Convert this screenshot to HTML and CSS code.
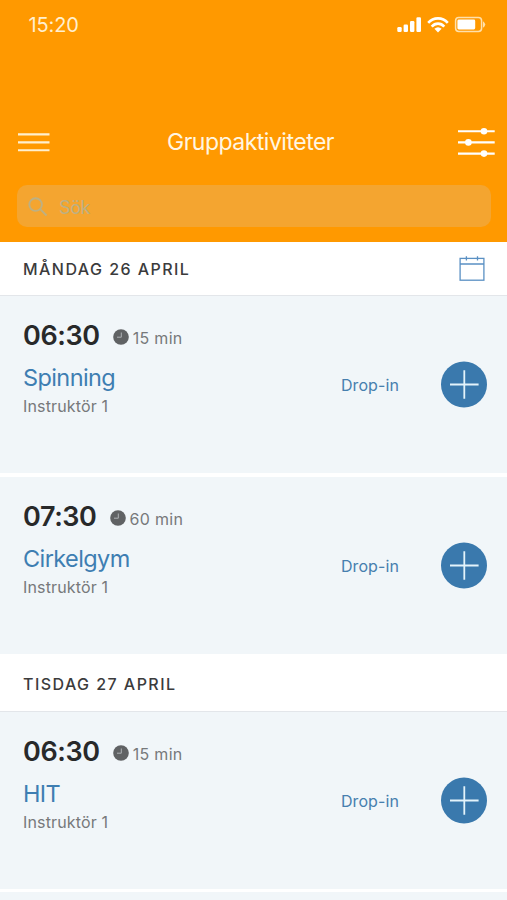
FILE: index.html
```html
<!DOCTYPE html>
<html lang="sv">
<head>
<meta charset="utf-8">
<title>Gruppaktiviteter</title>
<link rel="stylesheet" href="styles.css">
</head>
<body>
<svg class="defs" width="0" height="0">
  <symbol id="clock" viewBox="0 0 16 16"><circle cx="8" cy="8" r="7.8" fill="#606264"/><path d="M8.3 3.5V8.2H4" fill="none" stroke="#aeb2b4" stroke-width="1"/></symbol>
  <symbol id="plus" viewBox="0 0 46 47"><circle cx="23" cy="23.4" r="23" fill="#3a79ad"/><path d="M23.3 9.2V37.8M9 23.5H37.6" stroke="#e3f3fb" stroke-width="1.8"/></symbol>
</svg>
<header class="header">
  <div class="status">
    <span class="clock">15:20</span>
    <svg width="90" height="18" viewBox="0 0 90 18" fill="#fff">
      <rect x="0.3" y="11" width="4.4" height="5" rx="1.2"/><rect x="6.6" y="8.6" width="4.4" height="7.4" rx="1.2"/><rect x="13" y="5" width="4.4" height="11" rx="1.2"/><rect x="19.4" y="1.2" width="4.6" height="14.8" rx="1.2"/>
      <g fill="none" stroke="#fff" stroke-width="2.6"><path d="M31.2 6.9C36.5 0.9 45.5 0.9 50.8 6.9"/><path d="M34.7 10.6C38.2 6.6 43.8 6.6 47.3 10.6"/></g>
      <path d="M37.4 12.8Q41 9.8 44.6 12.8L41 16.4Z"/>
      <rect x="58.6" y="1.5" width="26" height="14" rx="3.2" fill="none" stroke="#ffe0ab" stroke-width="1.5"/>
      <rect x="60.4" y="3.5" width="17.8" height="10" rx="1.4"/><path d="M86 5.2Q90.5 8.5 86 11.8Z" fill="#ffe0ab"/>
    </svg>
  </div>
  <div class="nav">
    <svg width="32" height="22" viewBox="0 0 32 22" stroke="#fff0ce" stroke-width="2.1"><path d="M0 3.4H31.5M0 11.4H31.5M0 19.3H31.5"/></svg>
    <h1 class="title">Gruppaktiviteter</h1>
    <svg width="38" height="30" viewBox="0 0 38 30" fill="#fff"><path d="M1 4.2H37.7M1 15.4H37.7M1 26.6H37.7" stroke="#fff" stroke-width="2.1"/><circle cx="27" cy="4.2" r="3.3"/><circle cx="11.4" cy="15.4" r="3.3"/><circle cx="27" cy="26.6" r="3.3"/></svg>
  </div>
  <div class="search">
    <svg class="lens" width="20" height="20" viewBox="0 0 20 20" fill="none" stroke="#bdb083" stroke-width="1.9"><circle cx="7.6" cy="7.6" r="6.3"/><path d="M12.2 12.2L18.5 18.5"/></svg>
    <span class="placeholder">Sök</span>
  </div>
</header>
<main>
  <div class="day first"><h2 class="date">MÅNDAG 26 APRIL</h2>
    <svg width="26" height="26" viewBox="0 0 26 26" fill="none" stroke="#5a90c3" stroke-width="1.3"><rect x="1.1" y="2.4" width="23.8" height="21.8"/><path d="M1 8H25M7.4 0.3V4.6M18.5 0.3V4.6"/></svg>
  </div>
  <article class="card">
    <div class="info">
      <div class="when"><span class="time">06:30</span><svg class="dial" width="16" height="16"><use href="#clock"/></svg><span class="length">15 min</span></div>
      <div class="name">Spinning</div><div class="coach">Instruktör 1</div>
    </div>
    <span class="drop">Drop-in</span><svg class="add" width="46" height="47"><use href="#plus"/></svg>
  </article>
  <article class="card spaced">
    <div class="info">
      <div class="when"><span class="time">07:30</span><svg class="dial" width="16" height="16"><use href="#clock"/></svg><span class="length">60 min</span></div>
      <div class="name">Cirkelgym</div><div class="coach">Instruktör 1</div>
    </div>
    <span class="drop">Drop-in</span><svg class="add" width="46" height="47"><use href="#plus"/></svg>
  </article>
  <div class="day"><h2 class="date">TISDAG 27 APRIL</h2></div>
  <article class="card">
    <div class="info">
      <div class="when"><span class="time">06:30</span><svg class="dial" width="16" height="16"><use href="#clock"/></svg><span class="length">15 min</span></div>
      <div class="name">HIT</div><div class="coach">Instruktör 1</div>
    </div>
    <span class="drop">Drop-in</span><svg class="add" width="46" height="47"><use href="#plus"/></svg>
  </article>
  <div class="next"></div>
</main>
</body>
</html>
```
FILE: styles.css
```css
* { box-sizing: border-box; }
body { margin: 0; height: 900px; overflow: hidden; background: #fff; font-family: Inter, "Liberation Sans", sans-serif; }
svg { display: block; flex: none; }
.defs { position: absolute; }
.header { height: 242px; background: #ff9900; }
.status { height: 50px; padding: 0 20px 0 28.5px; display: flex; align-items: center; justify-content: space-between; }
.clock { font-size: 20px; line-height: 24px; letter-spacing: -0.1px; color: #ffefcf; }
.nav { height: 56px; margin-top: 64px; padding: 0 12px 0 18px; display: flex; align-items: center; justify-content: space-between; }
.title { margin: 0 6px 0 0; font-size: 23px; line-height: 28px; font-weight: 400; letter-spacing: -0.5px; color: #fff6e2; }
.search { height: 42px; margin: 15px 16px 0 17px; padding-left: 11px; border-radius: 10px; background: #f4a530; display: flex; align-items: center; }
.lens { margin-top: 2px; }
.placeholder { margin-left: 11px; padding-top: 3px; font-size: 18px; line-height: 22px; letter-spacing: -0.4px; color: #bdb083; }
.day { height: 58px; padding: 3px 22px 0 23px; border-bottom: 1px solid #e3e6ea; display: flex; align-items: center; justify-content: space-between; }
.first { height: 54px; padding-top: 0; }
.date { margin: 0; font-size: 16px; line-height: 20px; font-weight: 500; letter-spacing: 1.45px; color: #3b3b3c; }
.card { height: 177px; padding: 24px 20px 0 23px; background: #f1f6f9; display: flex; align-items: flex-start; }
.spaced { margin-top: 4px; }
.next { height: 8px; margin-top: 3px; background: #f1f6f9; }
.info { flex: 1; }
.when { height: 30px; display: flex; align-items: center; }
.time { padding-top: 1px; font-size: 27px; line-height: 30px; font-weight: 600; letter-spacing: -0.4px; color: #28292a; }
.dial { margin: 4px 4px 0 13px; }
.length { margin-top: 6px; font-size: 16px; line-height: 20px; letter-spacing: 0.3px; color: #77797b; }
.name { margin-top: 14px; font-size: 23.5px; line-height: 28px; letter-spacing: -0.6px; color: #3e7eb2; }
.coach { margin-top: 4px; font-size: 16px; line-height: 20px; letter-spacing: 0.15px; color: #77797b; }
.drop { margin: 55px 42px 0 0; font-size: 16px; line-height: 20px; letter-spacing: 0.1px; color: #477fae; }
.add { margin-top: 41px; }
```
